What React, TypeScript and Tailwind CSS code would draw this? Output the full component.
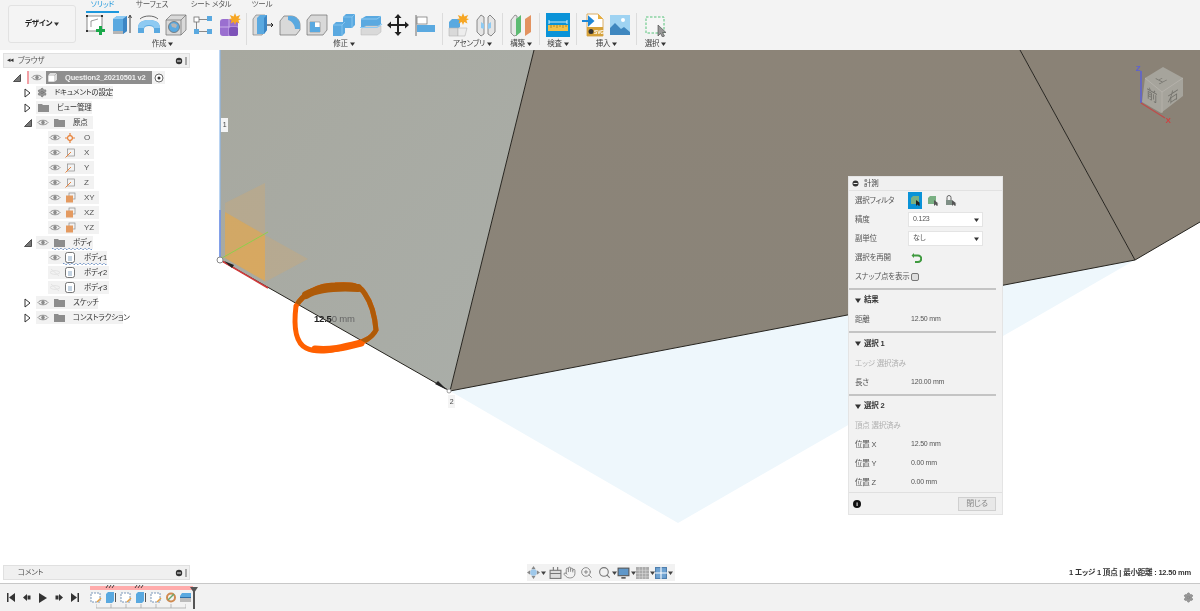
import React from "react";
import { Hand, Search, ZoomIn, Settings } from "lucide-react";

const F = "font-['Liberation_Sans','Noto_Sans_CJK_JP',sans-serif] [font-feature-settings:'palt'] tracking-[-0.2px]";

function Caret({ c = "#333", nav = false }: { c?: string; nav?: boolean }) {
  return <svg width="5" height="4" viewBox="0 0 5 4" className={`inline-block shrink-0 ${nav ? "ml-[1px]" : "ml-[2px]"}`}><path d="M0 0.5h5L2.5 4z" fill={c} /></svg>;
}

const I = ({ children }: { children: React.ReactNode }) => (
  <div className="w-[27px] h-[26px] flex items-center justify-center shrink-0">
    <svg width="24" height="24" viewBox="0 0 24 24">{children}</svg>
  </div>
);

const blue = "#5aa9e0", dblue = "#3d86c4", lblue = "#8ecaf2", g1 = "#d9d9d9", g2 = "#b5b5b5", g3 = "#6e6e6e";

const Sketch = () => <I><rect x="4" y="3" width="15" height="15" fill="#fff" stroke={g3} strokeWidth=".8" /><path d="M8 14 L8 8 L15 6" fill="none" stroke={g3} strokeWidth=".7" />{[[4,3],[19,3],[4,18],[19,18]].map(([x,y],i)=><rect key={i} x={x-1} y={y-1} width="2" height="2" fill="#333"/>)}<path d="M17.5 13v9M13 17.5h9" stroke="#1aa84a" strokeWidth="3" /></I>;
const Extrude = () => <I><path d="M3 6l4-3h10v15l-4 3H3z" fill={blue} /><path d="M3 6l4-3h10l-4 3z" fill={lblue} /><path d="M13 6l4-3v15l-4 3z" fill={dblue} /><path d="M3 18h10v3H3z" fill={g2} /><path d="M20 20V3M18.500 5l1.500-3 1.500 3" stroke="#333" strokeWidth=".9" fill="none" /></I>;
const Sweep = () => <I><path d="M1 15c0-6 5-8 11-8s11 2 11 8v5h-6v-4c0-2-2-3-5-3s-5 1-5 3v4H1z" fill={blue} /><path d="M1 15c0-6 5-8 11-8s11 2 11 8h-6c0-2-2-3-5-3s-5 1-5 3z" fill={lblue} /><path d="M3 6c4-4 14-4 18 0" stroke="#444" strokeWidth=".8" fill="none" /></I>;
const Hole = () => <I><path d="M2 7l5-5h15v15l-5 5H2z" fill={g1} stroke={g3} strokeWidth=".7" /><path d="M2 7h15v15M17 7l5-5" stroke={g3} strokeWidth=".7" fill="none" /><circle cx="10" cy="14" r="5.500" fill={blue} stroke={g3} strokeWidth=".8" /><path d="M7 11a5 5 0 0 1 6 1l-1 3-4-1z" fill={g2} /></I>;
const Pattern = () => <I><rect x="3" y="4" width="5" height="5" fill="#fff" stroke={g3} strokeWidth=".8" /><rect x="16" y="3" width="5" height="5" fill={blue} /><rect x="3" y="16" width="5" height="5" fill={blue} /><rect x="16" y="16" width="5" height="5" fill={blue} /><path d="M8 6.500h8M5.500 9v7M8 18.500h8" stroke={g3} strokeWidth=".8" /></I>;
const Star = ({ x = 17, y = 6 }: { x?: number; y?: number }) => <g transform={`translate(${x} ${y})`}><path d="M0-6l1.400 3.600L5.200-4 3.400-.6 6 0 3.400 1.400 4.500 4.500 1.200 3 0 6-1.200 3-4.500 4.500-3.400 1.400-6 0-3.400-.6-5.200-4-1.400-2.400z" fill="#f6a623" /></g>;
const Solid = () => <I><rect x="2" y="6" width="18" height="17" rx="3" fill="#9a6fd0" /><path d="M2 14h18M11 6v17" stroke="#c9b0e8" strokeWidth="1" /><rect x="11" y="14" width="9" height="9" rx="2" fill="#7d52b8" /><Star /></I>;
const Press = () => <I><path d="M2 6l3-4h9v16l-3 4H2z" fill={g1} stroke={g3} strokeWidth=".6" /><path d="M6 5l3-3h7v15l-3 4H6z" fill={blue} /><path d="M13 5l3-3v15l-3 4z" fill={dblue} /><path d="M16 12h6M20 10l2 2-2 2" stroke="#222" strokeWidth="1" fill="none" /></I>;
const Fillet = () => <I><path d="M2 22V8l4-5h7c5 0 9 4 9 9v5l-4 5z" fill={g1} stroke={g3} strokeWidth=".7" /><path d="M10 3h3c5 0 9 4 9 9v4h-5c0-4-3-8-7-9z" fill={blue} /></I>;
const Shell = () => <I><path d="M2 7l4-5h16v15l-4 5H2z" fill={g1} stroke={g3} strokeWidth=".7" /><path d="M5 9h10v10H5z" fill="#fff" stroke={g3} strokeWidth=".5" /><path d="M5 9h5v5h5v5H5z" fill={blue} /></I>;
const Combine = () => <I><path d="M11 4l3-3h9v11l-3 3h-9z" fill={blue} /><path d="M11 4h9v11M20 4l3-3" stroke={lblue} strokeWidth=".8" fill="none" /><path d="M1 12l3-3h9v11l-3 3H1z" fill={blue} /><path d="M1 12h9v11M10 12l3-3" stroke={lblue} strokeWidth=".8" fill="none" /></I>;
const Offset = () => <I><path d="M2 6l5-3h15v8l-4 3H2z" fill={blue} /><path d="M2 6h16l4-3" stroke={lblue} strokeWidth="1" fill="none" /><path d="M2 16l5-3h15v6l-4 3H2z" fill={g1} stroke={g2} strokeWidth=".5" /><path d="M1 14.500h17l5-3.500" stroke={lblue} strokeWidth="1.200" fill="none" /></I>;
const Move = () => <I><path d="M12 1l3.500 4H13v6h6V8.500l4 3.500-4 3.500V13h-6v6h2.500L12 23l-3.500-4H11v-6H5v2.500L1 12l4-3.500V11h6V5H8.500z" fill="#222" /></I>;
const Align = () => <I><path d="M3 2v21" stroke={g3} strokeWidth="1" /><rect x="4" y="4" width="10" height="7" fill="#fff" stroke={g3} strokeWidth=".7" /><rect x="4" y="12" width="18" height="7" fill={blue} /></I>;
const Assembly = () => <I><path d="M2 9l3-3h8v8l-3 2H2z" fill={blue} /><path d="M2 15h9v8H2z" fill={g1} stroke={g2} strokeWidth=".6" /><path d="M11 15h9l-2 8h-7z" fill="#ededed" stroke={g2} strokeWidth=".6" /><Star x={16} y={6} /></I>;
const Joint = () => <I><path d="M3 7l4-5 3 2v17l-3 2-4-4z" fill="#e5e5e5" stroke={g3} strokeWidth=".8" /><path d="M21 7l-5-5-2 2v17l3 2 4-4z" fill="#e5e5e5" stroke={g3} strokeWidth=".8" /><path d="M7 9l3 2v5l-3-1z" fill={lblue} /><path d="M14 11l3-2v6l-3 1z" fill={lblue} /></I>;
const Construct = () => <I><path d="M2 7l4-5 2 1v19l-3 1-3-3z" fill="#e8e8e8" stroke={g3} strokeWidth=".7" /><path d="M7 6l5-4v17l-5 4z" fill="#5dbb72" /><path d="M16 6l6-4v17l-6 4z" fill="#e39360" /></I>;
const Inspect = () => <div className="w-[24px] h-[24px] bg-[#0a93d8] flex items-center justify-center shrink-0"><svg width="20" height="20" viewBox="0 0 20 20"><path d="M1 5v4M19 5v4M1 7h18" stroke="#fff" strokeWidth=".8" /><rect x="0" y="10" width="20" height="6" fill="#f2c14a" /><path d="M3 10v3M6 10v2M9 10v3M12 10v2M15 10v3M18 10v2" stroke="#8a6a10" strokeWidth=".6" /></svg></div>;
const InsertI = () => <I><path d="M6 1h11l5 5v17H6z" fill="#fff" stroke="#d8a550" strokeWidth=".9" /><path d="M17 1v5h5z" fill="#e8b040" /><rect x="6" y="14" width="16" height="9" fill="#d6a23a" /><circle cx="10" cy="18.500" r="2.500" fill="#333" /><text x="13" y="21" fontSize="5" fontWeight="700" fill="#fff" fontFamily="Liberation Sans">SVG</text><path d="M1 8h10M8 4.500L12 8l-4 3.500z" stroke="#1c87d8" strokeWidth="2" fill="#1c87d8" /></I>;
const Picture = () => <I><rect x="2" y="2" width="20" height="20" fill="#9fd3f2" /><circle cx="15" cy="7" r="2" fill="#fff" /><path d="M2 22v-7l5-5 6 6 3-2 6 5v3z" fill="#3f87bf" /></I>;
const SelectI = () => <I><rect x="2" y="4" width="18" height="16" fill="#fff" fillOpacity=".3" stroke="#57c27a" strokeWidth="1" strokeDasharray="2.500 1.500" /><path d="M14 12v11l2.500-2.500 2 3.500 2-1-2-3.500H22z" fill="#999" stroke="#444" strokeWidth=".6" /></I>;

function Group({ label, w, children, divider = true, extra = "" }: { label: string; w: string; children: React.ReactNode; divider?: boolean; extra?: string }) {
  return (
    <div className={`flex flex-col items-center ${w} h-[32px] ${extra} ${divider ? "border-r border-[#dcdcdc]" : ""}`}>
      <div className="flex h-[26px] items-center shrink-0 -mt-[1px]">{children}</div>
      <div className="flex items-center text-[7.500px] leading-[10px] text-[#444] shrink-0 mt-[1px]">{label}<Caret /></div>
    </div>
  );
}

function Toolbar() {
  return (
    <div className="h-[50px] bg-[#f3f3f3] flex shrink-0">
      <div className="w-[68px] h-[38px] ml-[8px] mt-[5px] mr-[6px] rounded-[3px] border border-[#e2e2e2] bg-[#f4f4f4] flex items-center justify-center text-[7.500px] font-bold text-[#222]">デザイン<Caret /></div>
      <div className="flex flex-col">
        <div className="flex h-[13px] text-[7.500px] leading-[10px] text-[#555]">
          <div className="w-[33px] ml-[4px] h-[13px] text-center text-[#1c97dc] border-b-2 border-[#1c97dc]">ソリッド</div>
          <div className="w-[58px] ml-[4px] text-center">サーフェス</div>
          <div className="w-[60px] text-center">シート メタル</div>
          <div className="w-[42px] text-center">ツール</div>
        </div>
        <div className="flex">
          <Group label="作成" w="w-[165px]" extra="pr-[3px]"><Sketch /><Extrude /><Sweep /><Hole /><Pattern /><Solid /></Group>
          <Group label="修正" w="w-[196px]" extra="pr-[1px]"><Press /><Fillet /><Shell /><Combine /><Offset /><Move /><Align /></Group>
          <Group label="アセンブリ" w="w-[60px]"><Assembly /><Joint /></Group>
          <Group label="構築" w="w-[37px]"><Construct /></Group>
          <Group label="検査" w="w-[37px]"><Inspect /></Group>
          <Group label="挿入" w="w-[60px]"><InsertI /><Picture /></Group>
          <Group label="選択" w="w-[37px]" divider={false}><SelectI /></Group>
        </div>
      </div>
    </div>
  );
}

const Eye = ({ off = false }: { off?: boolean }) => (
  <svg width="12" height="9" viewBox="0 0 12 9" className="shrink-0">
    {off ? <g stroke="#e3e3e3" fill="none" strokeWidth="1"><path d="M1 4.500C3 2 9 2 11 4.500 9 7 3 7 1 4.500z" /><path d="M2 1l8 7" /></g> :
      <g><path d="M1 4.500C3 1.500 9 1.500 11 4.500 9 7.500 3 7.500 1 4.500z" fill="none" stroke="#8c8c8c" strokeWidth="1" /><circle cx="6" cy="4.500" r="1.800" fill="#8c8c8c" /></g>}
  </svg>
);
const Folder = () => <svg width="11" height="9" viewBox="0 0 11 9" className="shrink-0"><path d="M0 1h4l1 1h6v7H0z" fill="#8d8d8d" /></svg>;
const OpenTri = () => <svg width="7" height="10" viewBox="0 0 7 10" className="shrink-0"><path d="M1 1l5 4-5 4z" fill="#fff" stroke="#333" strokeWidth="1" /></svg>;
const SolidTri = () => <svg width="8" height="8" viewBox="0 0 8 8" className="shrink-0"><path d="M0.500 7.500L7.500 0.500V7.500z" fill="#777" stroke="#333" strokeWidth=".8" /></svg>;
const Origin = () => <svg width="10" height="10" viewBox="0 0 10 10" className="shrink-0"><circle cx="5" cy="5" r="2.400" fill="none" stroke="#e8823a" strokeWidth="1.200" /><path d="M5 0v3M5 7v3M0 5h3M7 5h3" stroke="#e8823a" strokeWidth="1.200" /></svg>;
const AxisI = () => <svg width="10" height="10" viewBox="0 0 10 10" className="shrink-0"><rect x="2.500" y="1" width="7" height="7" fill="none" stroke="#8c8c8c" strokeWidth=".7" /><path d="M0.500 9.500L6 4" stroke="#e8823a" strokeWidth="1" /></svg>;
const PlaneI = () => <svg width="11" height="11" viewBox="0 0 11 11" className="shrink-0"><rect x="4" y="1" width="6" height="6" fill="none" stroke="#8c8c8c" strokeWidth=".7" /><rect x="1" y="3.500" width="7" height="7" fill="#e49a60" /></svg>;
const BodyI = () => <svg width="10" height="11" viewBox="0 0 10 11" className="shrink-0"><rect x=".5" y=".5" width="9" height="10" rx="2" fill="#fff" stroke="#555" strokeWidth=".8" /><rect x="3" y="4" width="4" height="5" fill="#c3d3e2" /></svg>;
const Wavy = ({ w }: { w: number }) => <svg width={w} height="3" viewBox={`0 0 ${w} 3`} className="absolute left-0 bottom-[-1px]"><path d={`M0 2${Array.from({ length: Math.floor(w / 2) }, (_, i) => ` l1 ${i % 2 ? 1 : -1}  l1 ${i % 2 ? -1 : 1}`).join("")}`} fill="none" stroke="#4d78b8" strokeWidth=".8" strokeDasharray="1.500 .7" /></svg>;

function Chip({ width, ml, children }: { width: number; ml: number; children: React.ReactNode }) {
  return <div className="h-[13px] bg-[#f2f2f2] flex items-center relative text-[7.500px] text-[#333]" style={{ width, marginLeft: ml }}>{children}</div>;
}

function Row({ children }: { children: React.ReactNode }) {
  return <div className="h-[15px] flex items-center relative">{children}</div>;
}

function Tree() {
  const leaf = (icon: React.ReactNode, t: string, w = 46, off = false, wavy = false) => (
    <Row key={t}>
      <Chip width={w} ml={45}>
        <span className="ml-[1px]"><Eye off={off} /></span>
        <span className="ml-[3px] w-[12px] flex justify-center">{icon}</span>
        <span className={`ml-[8px] ${t.length <= 2 ? "text-[8px] text-[#555]" : ""}`}>{t}</span>
        {wavy && <span className="absolute left-[15px]"><span className="block relative h-[12px] w-[44px]"><Wavy w={44} /></span></span>}
      </Chip>
    </Row>
  );
  return (
    <div className="flex flex-col mt-[2px]">
      <Row>
        <span className="ml-[10px] mr-[6px]"><SolidTri /></span>
        <div className="w-[138px] h-[13px] bg-[#f2f2f2] flex items-center">
          <div className="w-[2px] h-[13px] bg-[#f2a0a5]" />
          <span className="ml-[2px]"><Eye /></span>
          <div className="ml-[3px] w-[106px] h-[13px] bg-[#8e8e8e] flex items-center relative">
            <svg width="11" height="11" viewBox="0 0 11 11" className="ml-[1px]"><path d="M1 3l2-2h7v7l-2 2H1z" fill="#fff" stroke="#888" strokeWidth=".6" /><path d="M1 3h7v7M8 3l2-2" fill="none" stroke="#888" strokeWidth=".6" /></svg>
            <span className="ml-[7px] text-[7.500px] font-bold text-[#f0f0f0] whitespace-nowrap">Question2_20210501 v2</span>
          </div>
          <svg width="10" height="10" viewBox="0 0 10 10" className="ml-[2px]"><circle cx="5" cy="5" r="4" fill="#fff" stroke="#444" strokeWidth=".8" /><circle cx="5" cy="5" r="1.500" fill="#333" /></svg>
        </div>
      </Row>
      <Row>
        <span className="absolute left-[21px]"><OpenTri /></span>
        <Chip width={77} ml={33}>
          <Settings size={13} color="#777" fill="#999" className="ml-[1px]" />
          <span className="ml-[7px] whitespace-nowrap">ドキュメントの設定</span>
        </Chip>
      </Row>
      <Row>
        <span className="absolute left-[21px]"><OpenTri /></span>
        <Chip width={56} ml={33}><span className="ml-[2px]"><Folder /></span><span className="ml-[8px] whitespace-nowrap">ビュー管理</span></Chip>
      </Row>
      <Row>
        <span className="absolute left-[21px]"><SolidTri /></span>
        <Chip width={57} ml={33}><span className="ml-[1px]"><Eye /></span><span className="ml-[5px]"><Folder /></span><span className="ml-[8px]">原点</span></Chip>
      </Row>
      {leaf(<Origin />, "O")}
      {leaf(<AxisI />, "X")}
      {leaf(<AxisI />, "Y")}
      {leaf(<AxisI />, "Z")}
      {leaf(<PlaneI />, "XY", 51)}
      {leaf(<PlaneI />, "XZ", 51)}
      {leaf(<PlaneI />, "YZ", 51)}
      <Row>
        <span className="absolute left-[21px]"><SolidTri /></span>
        <Chip width={57} ml={33}><span className="ml-[1px]"><Eye /></span><span className="ml-[5px]"><Folder /></span><span className="ml-[8px]">ボディ</span><span className="absolute left-[16px] top-0 block h-[13px] w-[40px]"><Wavy w={40} /></span></Chip>
      </Row>
      {leaf(<BodyI />, "ボディ1", 59, false, true)}
      {leaf(<BodyI />, "ボディ2", 61, true)}
      {leaf(<BodyI />, "ボディ3", 61, true)}
      <Row>
        <span className="absolute left-[21px]"><OpenTri /></span>
        <Chip width={62} ml={33}><span className="ml-[1px]"><Eye /></span><span className="ml-[5px]"><Folder /></span><span className="ml-[8px] whitespace-nowrap">スケッチ</span></Chip>
      </Row>
      <Row>
        <span className="absolute left-[21px]"><OpenTri /></span>
        <Chip width={87} ml={33}><span className="ml-[1px]"><Eye /></span><span className="ml-[5px]"><Folder /></span><span className="ml-[8px] whitespace-nowrap">コンストラクション</span></Chip>
      </Row>
    </div>
  );
}

function PanelHead({ title, arrows = false }: { title: string; arrows?: boolean }) {
  return (
    <div className="h-[15px] w-[187px] bg-[#f0f0f0] border border-[#e0e0e0] flex items-center text-[7.500px] text-[#555]">
      <span className="ml-[3px] text-[7px] text-[#333] tracking-[-1px] w-[10px]">{arrows ? "◂◂" : ""}</span>
      <span className="ml-[1px]">{title}</span>
      <svg width="8" height="8" viewBox="0 0 8 8" className="ml-auto"><circle cx="4" cy="4" r="3.200" fill="#333" /><path d="M2 4h4" stroke="#eee" strokeWidth="1" /></svg>
      <span className="mx-[2px] w-[2px] h-[8px] border-x border-[#aaa]" />
    </div>
  );
}

function Scene() {
  const circle = "M296 306 C303 294 318 285 335 285 C352 284 360 285 365 294 C372 304 375 318 376 330 C372 338 364 342 350 346 C335 350 318 354 306 348 C294 342 294 322 296 306 Z";
  return (
    <svg className="absolute inset-0 w-full h-full" viewBox="0 50 1200 533">
      <defs>
        <linearGradient id="lf" x1="0" y1="0" x2="1" y2="1"><stop offset="0" stopColor="#a7a89f" /><stop offset="1" stopColor="#aaaea9" /></linearGradient>
        <linearGradient id="mf" x1="0" y1="0" x2="0" y2="1"><stop offset="0" stopColor="#8c8478" /><stop offset="1" stopColor="#8a8479" /></linearGradient>
        <clipPath id="lc"><polygon points="220,50 220,260 450,391 534,50" /></clipPath>
      </defs>
      <polygon points="450,391 678,523 1135,260" fill="#eef7fc" />
      <polygon points="220,50 220,260 450,391 534,50" fill="url(#lf)" />
      <polygon points="534,50 450,391 1135,260 1020,50" fill="url(#mf)" />
      <polygon points="1020,50 1135,260 1200,222 1200,50" fill="#8a8276" />
      <path d="M534 50L450 391M450 391L1135 260M1020 50L1135 260L1200 222M220 260L450 391" stroke="#26241f" strokeWidth="1" fill="none" />
      <path d="M220 50V260" stroke="#8db8ea" strokeWidth="1.200" />
      <path d="M220 210V258" stroke="#6f8fe6" strokeWidth="1.500" />
      <polygon points="225,203 265,183 265,281 225,258" fill="#e8a850" fillOpacity=".22" />
      <polygon points="225,212 265,235 265,281 225,258" fill="#eda83c" fillOpacity=".5" />
      <polygon points="225,258 265,235 308,259 265,282" fill="#e8a850" fillOpacity=".22" />
      <path d="M222 258L268 232" stroke="#8fcf4a" strokeWidth="1" />
      <path d="M222 261L268 288" stroke="#d23a3a" strokeWidth="1.500" />
      <path d="M224 261l10 4-2 3z" fill="#222" />
      <path d="M447 390l-12-6 3-3z" fill="#222" />
      <circle cx="220" cy="260" r="3" fill="#fff" stroke="#888" strokeWidth="1" />
      <circle cx="449" cy="391" r="2" fill="#fff" stroke="#888" strokeWidth=".8" />
      <path d={circle} fill="none" stroke="#ff6000" strokeWidth="5" />
      <path d="M315 349 C330 351 345 347 361 343" fill="none" stroke="#ff6000" strokeWidth="7" strokeLinecap="round" />
      <path d={circle} fill="none" stroke="#ae5a08" strokeWidth="5" clipPath="url(#lc)" />
      <path d="M306 295 C318 288 340 287 358 288" fill="none" stroke="#ae5a08" strokeWidth="8" strokeLinecap="round" />
      <g>
        <path d="M1141 103V71" stroke="#5a5fd8" strokeWidth="1.500" />
        <path d="M1141 103L1165 118" stroke="#c04a4a" strokeWidth="1.200" />
        <path d="M1145 78L1163 67L1183 78V96L1161 113L1142 102z" fill="#a6a49c" />
        <path d="M1162 92L1183 78M1162 92L1145 78M1162 92V113" stroke="#bab8b0" strokeWidth=".7" />
        <text fontSize="10" fill="#72716b" textAnchor="middle" transform="matrix(.85 -.45 .85 .45 1163 82)" fontFamily="Noto Sans CJK JP">上</text>
        <text fontSize="13" fill="#72716b" textAnchor="middle" transform="matrix(.85 .5 0 1 1152 100)" fontFamily="Noto Sans CJK JP">前</text>
        <text fontSize="13" fill="#72716b" textAnchor="middle" transform="matrix(.85 -.55 0 1 1173 101)" fontFamily="Noto Sans CJK JP">右</text>
        <text x="1138" y="71" fontSize="8" fontWeight="700" fill="#5a5fd8" textAnchor="middle" fontFamily="Liberation Sans">Z</text>
        <text x="1168" y="123" fontSize="8" fontWeight="700" fill="#d04040" textAnchor="middle" fontFamily="Liberation Sans">X</text>
      </g>
    </svg>
  );
}

function MRow({ label, value, dim, children }: { label?: string; value?: string; dim?: boolean; children?: React.ReactNode }) {
  return (
    <div className="h-[19px] flex items-center shrink-0">
      <span className={`ml-[6px] w-[56px] text-[7.500px] whitespace-nowrap ${dim ? "text-[#b0b0b0]" : "text-[#555]"}`}>{label}</span>
      {value && <span className="text-[7px] text-[#555] whitespace-nowrap">{value}</span>}
      {children}
    </div>
  );
}
const Sec = ({ t, h }: { t: string; h: string }) => (
  <div className={`${h} flex items-center text-[7.500px] font-bold text-[#333] shrink-0`}><svg width="6" height="5" viewBox="0 0 6 5" className="ml-[6px] mr-[3px]"><path d="M0 .5h6L3 5z" fill="#333" /></svg>{t}</div>
);
const Div = () => <div className="h-[2px] w-[147px] bg-[#c4c4c4] shrink-0" />;
const Sel = ({ t }: { t: string }) => (
  <div className="-ml-[3px] w-[75px] h-[15px] bg-white border border-[#e4e4e4] flex items-center pl-[4px] text-[7px] text-[#555]">{t}<svg width="5" height="4" viewBox="0 0 5 4" className="ml-auto mr-[3px]"><path d="M0 .5h5L2.500 4z" fill="#333" /></svg></div>
);

function Measure() {
  return (
    <div className="absolute left-[848px] top-[126px] w-[155px] h-[339px] bg-[#f2f2f2] border border-[#e4e4e4] flex flex-col">
      <div className="h-[14px] flex items-center bg-[#f0f0f0] border-b border-[#e2e2e2] text-[7.500px] text-[#444] shrink-0">
        <svg width="7" height="7" viewBox="0 0 7 7" className="ml-[3px] mr-[5px]"><circle cx="3.500" cy="3.500" r="3" fill="#333" /><path d="M1.500 3.500h4" stroke="#eee" strokeWidth="1" /></svg>計測
      </div>
      <MRow label="選択フィルタ">
        <div className="-ml-[3px] w-[14px] h-[17px] bg-[#0a93d8] flex items-center justify-center"><svg width="10" height="11" viewBox="0 0 10 11"><path d="M1 3l2-2h6v6l-2 2H1z" fill="#7ab083" /><path d="M6 5v6l1.500-1.500L9 11l1-1-1-1.500h1.500z" fill="#222" /></svg></div>
        <svg width="12" height="11" viewBox="0 0 12 11" className="ml-[5px]"><path d="M1 3l2-2h6v6l-2 2H1z" fill="#7ab083" /><path d="M7 5v6l1.500-1.500 1.500 1.500 1-1-1-1.500h1.500z" fill="#555" /></svg>
        <svg width="12" height="11" viewBox="0 0 12 11" className="ml-[6px]"><path d="M1 5h6v5H1z" fill="#7f8f86" /><path d="M2 5V2.500a2 2 0 0 1 4 0V5" fill="none" stroke="#666" /><path d="M7 5v6l1.500-1.500 1.500 1.500 1-1-1-1.500h1.500z" fill="#555" /></svg>
      </MRow>
      <MRow label="精度"><Sel t="0.123" /></MRow>
      <MRow label="副単位"><Sel t="なし" /></MRow>
      <MRow label="選択を再開"><svg width="11" height="11" viewBox="0 0 11 11"><path d="M3 1L0.500 3.500 3 6V4.500h4a2 2 0 0 1 0 4.500H4V11h3a4 4 0 0 0 0-8.500H3z" fill="#3f9a3f" /></svg></MRow>
      <MRow label="スナップ点を表示"><div className="w-[8px] h-[8px] rounded-[2px] bg-[#dedede] border border-[#777]" /></MRow>
      <div className="h-[2px] shrink-0" />
      <Div />
      <Sec t="結果" h="h-[20px]" />
      <MRow label="距離" value="12.50 mm" />
      <div className="h-[2px] shrink-0" />
      <Div />
      <Sec t="選択 1" h="h-[21px]" />
      <MRow label="エッジ 選択済み" dim />
      <MRow label="長さ" value="120.00 mm" />
      <div className="h-[2px] shrink-0" />
      <Div />
      <Sec t="選択 2" h="h-[20px]" />
      <MRow label="頂点 選択済み" dim />
      <MRow label="位置 X" value="12.50 mm" />
      <MRow label="位置 Y" value="0.00 mm" />
      <MRow label="位置 Z" value="0.00 mm" />
      <div className="mt-auto h-[23px] border-t border-[#e0e0e0] flex items-center shrink-0">
        <span className="ml-[4px] w-[8px] h-[8px] rounded-full bg-[#111] text-white text-[6px] font-bold leading-[8px] text-center">i</span>
        <div className="ml-auto mr-[6px] w-[38px] h-[14px] bg-[#e8e8e8] border border-[#d0d0d0] text-[8px] leading-[12px] text-center text-[#888]">閉じる</div>
      </div>
    </div>
  );
}

function NavBar() {
  const c = "#777";
  return (
    <div className="absolute left-[527px] bottom-[2px] w-[148px] h-[17px] bg-[#f2f2f2] flex items-center">
      <svg width="13" height="13" viewBox="0 0 12 12" className="shrink-0"><path d="M6 0l2 3H4zM6 12l2-3H4zM0 6l3-2v4zM12 6l-3-2v4z" fill="#888" /><circle cx="6" cy="6" r="3" fill="#9ec8ea" /></svg>
      <Caret c="#444" nav />
      <svg width="13" height="12" viewBox="0 0 12 11" className="ml-[3px] shrink-0"><rect x="1" y="3" width="10" height="7.500" fill="#ddd" stroke={c} /><path d="M1 6h10M4 0v3M8 0v3" stroke={c} /></svg>
      <Hand size={13} color={c} strokeWidth={1.5} className="ml-[1px] shrink-0" />
      <ZoomIn size={13} color={c} strokeWidth={1.5} className="ml-[3.500px] shrink-0" />
      <Search size={13} color={c} strokeWidth={2} className="ml-[5px] shrink-0" /><Caret c="#444" nav />
      <svg width="13" height="12" viewBox="0 0 12 11" className="shrink-0"><rect x="1" y="1" width="10" height="7" fill="#5f97c9" stroke="#555" /><path d="M4 10h4" stroke="#555" strokeWidth="1.500" /></svg><Caret c="#444" nav />
      <svg width="13" height="12" viewBox="0 0 12 11" className="shrink-0"><rect width="12" height="11" fill="#aaa" /><path d="M3 0v11M6 0v11M9 0v11M0 3h12M0 6h12M0 9h12" stroke="#ddd" strokeWidth=".5" /></svg><Caret c="#444" nav />
      <svg width="12" height="12" viewBox="0 0 11 11" className="shrink-0"><rect x=".5" y=".5" width="10" height="10" fill="#6fa3d2" stroke="#4f7fae" /><path d="M5.500 0v11M0 5.500h11" stroke="#fff" /></svg><Caret c="#444" nav />
    </div>
  );
}

const TL = ({ kind }: { kind: "sk" | "ex" | "mo" | "st" }) => (
  <svg width="12" height="13" viewBox="0 0 12 13" className="shrink-0">
    {kind === "sk" && <g><rect x="1" y="2" width="9" height="9" fill="#fff" stroke="#5a7fa8" strokeWidth=".8" strokeDasharray="2 1" /><path d="M7 11l4-4" stroke="#e8a040" strokeWidth="1.500" /></g>}
    {kind === "ex" && <g><path d="M1 3l2-2h6v9l-2 2H1z" fill={blue} /><path d="M10.500 2v9" stroke="#555" /></g>}
    {kind === "mo" && <g><circle cx="6" cy="6.500" r="4" fill="none" stroke="#d08a50" strokeWidth="2" /><path d="M3 9l6-6" stroke="#6aa86a" strokeWidth="1.500" /></g>}
    {kind === "st" && <g><path d="M0 5l2-3h9v4H0z" fill={blue} /><path d="M0 7h11v4H0z" fill="#bbb" /><path d="M0 6.500h11" stroke="#2f6fa8" /></g>}
  </svg>
);

function Bottom() {
  const p = "#333";
  return (
    <div className="h-[28px] shrink-0 bg-[#f2f2f2] border-t border-[#c8c8c8] flex items-center relative">
      <div className="ml-[7px] flex items-center gap-[8px] w-[83px]">
        <svg width="8" height="9" viewBox="0 0 8 9"><path d="M0 0h1.500v9H0zM8 0v9L2 4.500z" fill={p} /></svg>
        <svg width="8" height="9" viewBox="0 0 8 9"><path d="M4 1v7L0 4.500zM4.500 2.500h3v4h-3z" fill={p} /></svg>
        <svg width="8" height="10" viewBox="0 0 8 10"><path d="M0 0l8 5-8 5z" fill={p} /></svg>
        <svg width="8" height="9" viewBox="0 0 8 9"><path d="M4 1v7l4-3.500zM.5 2.500h3v4h-3z" fill={p} /></svg>
        <svg width="8" height="9" viewBox="0 0 8 9"><path d="M8 0H6.500v9H8zM0 0v9l6-4.500z" fill={p} /></svg>
      </div>
      <div className="relative w-[105px] h-[24px] flex flex-col">
        <div className="h-[4px] w-[103px] bg-[#ffabab]" />
        <svg width="100" height="3" viewBox="0 0 100 3" className="absolute -top-[1px] left-0"><path d="M16 3l2-3M19 3l2-3M22 3l2-3M45 3l2-3M48 3l2-3M51 3l2-3" stroke="#333" strokeWidth=".9" /></svg>
        <div className="flex gap-[3px] mt-[1px]"><TL kind="sk" /><TL kind="ex" /><TL kind="sk" /><TL kind="ex" /><TL kind="sk" /><TL kind="mo" /><TL kind="st" /></div>
        <svg width="90" height="5" viewBox="0 0 90 5" className="ml-[6px]"><path d="M0 0v4h90V0M15 0v4M30 0v4M45 0v4M60 0v4M75 0v4" stroke="#aaa" fill="none" strokeWidth=".8" /></svg>
        <svg width="8" height="24" viewBox="0 0 8 24" className="absolute left-[100px] top-[1px]"><path d="M0 0h8L5 4.500V22H3V4.500z" fill="#555" /></svg>
      </div>
      <Settings size={11} color="#888" fill="#999" className="absolute right-[6px] top-[8px]" />
    </div>
  );
}

export default function App() {
  return (
    <div className={`${F} w-[1200px] h-[611px] overflow-hidden flex flex-col bg-white blur-[0.45px]`}>
      <Toolbar />
      <div className="relative flex-1">
        <Scene />
        <div className="absolute left-[3px] top-[3px] w-[187px]">
          <PanelHead title="ブラウザ" arrows />
          <Tree />
        </div>
        <div className="absolute left-[3px] bottom-[3px]"><PanelHead title="コメント" /></div>
        <span className="absolute left-[221px] top-[68px] w-[7px] h-[14px] bg-[#f4f4f4] text-[7px] leading-[14px] text-center text-[#444]">1</span>
        <span className="absolute left-[448px] top-[345px] w-[7px] h-[13px] bg-[#f4f4f4] text-[7px] leading-[13px] text-center text-[#444]">2</span>
        <span className="absolute left-[314px] top-[263px] text-[9.500px] leading-[12px] whitespace-nowrap text-[#666]"><b className="text-[#222] font-bold">12.5</b>0 mm</span>
        <Measure />
        <NavBar />
        <div className="absolute right-[9px] bottom-[5px] text-[7.500px] font-bold text-[#333] whitespace-nowrap">1 エッジ 1 頂点 | 最小距離 : 12.50 mm</div>
      </div>
      <Bottom />
    </div>
  );
}
